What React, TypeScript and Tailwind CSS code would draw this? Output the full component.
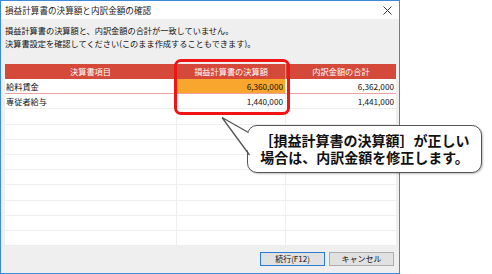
import React from "react";

const font = { fontFamily: '"Noto Sans CJK JP", "Noto Sans", sans-serif' };

const rows: { name: string; a: string; b: string; sel?: boolean }[] = [
  { name: "給料賃金", a: "6,360,000", b: "6,362,000", sel: true },
  { name: "専従者給与", a: "1,440,000", b: "1,441,000" },
  { name: "", a: "", b: "" },
  { name: "", a: "", b: "" },
  { name: "", a: "", b: "" },
  { name: "", a: "", b: "" },
  { name: "", a: "", b: "" },
  { name: "", a: "", b: "" },
  { name: "", a: "", b: "" },
  { name: "", a: "", b: "" },
  { name: "", a: "", b: "" },
];

export default function App() {
  return (
    <div className="relative w-[492px] h-[274px] bg-white overflow-hidden" style={font}>
      <div className="flex flex-col w-[400px] h-[274px] border border-[#3f8ad8] bg-[#efefef]">
        <div className="flex items-center justify-between h-[18px] bg-white pl-[4px] pr-[7px]">
          <span className="text-[8.6px] leading-none text-[#222]">損益計算書の決算額と内訳金額の確認</span>
          <svg width="9" height="9" viewBox="0 0 9 9">
            <path d="M0.5 0.5 L8.5 8.5 M8.5 0.5 L0.5 8.5" stroke="#333" strokeWidth="1" />
          </svg>
        </div>
        <div className="flex flex-col flex-1 px-[4px] pt-[5px]">
          <div className="text-[8.2px] leading-[13px] text-[#111]">
            <div>損益計算書の決算額と、内訳金額の合計が一致していません。</div>
            <div>決算書設定を確認してください(このまま作成することもできます)。</div>
          </div>
          <div className="mt-[14px] w-[391px]">
            <div className="flex h-[15px] bg-[#d5493b] text-white text-[8.2px]">
              <div className="w-[172px] flex items-center justify-center border-r border-[#e8887e]">決算書項目</div>
              <div className="w-[109px] flex items-center justify-center border-r border-[#e8887e]">損益計算書の決算額</div>
              <div className="flex-1 flex items-center justify-center">内訳金額の合計</div>
            </div>
            {rows.map((r, i) => (
              <div
                key={i}
                className={
                  "flex h-[15.2px] text-[8.2px] text-[#111] bg-white border-b " +
                  (r.sel ? "border-[#f0a0a0]" : "border-[#eeeeee]")
                }
              >
                <div className="w-[172px] flex items-center pl-[1px] border-r border-[#eeeeee]">{r.name}</div>
                <div
                  className={
                    "w-[109px] flex items-center justify-end pr-[2px] border-r border-[#eeeeee] " +
                    (r.sel ? "bg-[#f8a62e]" : "")
                  }
                >
                  {r.a}
                </div>
                <div className="flex-1 flex items-center justify-end pr-[2px]">{r.b}</div>
              </div>
            ))}
          </div>
          <div className="flex justify-end gap-[4px] mt-[6px] pr-[1px]">
            <div className="w-[65px] h-[14px] flex items-center justify-center bg-[#e1e1e1] border border-[#2a7ad6] text-[8px] text-[#111]">
              続行(F12)
            </div>
            <div className="w-[65px] h-[14px] flex items-center justify-center bg-[#e1e1e1] border border-[#adadad] text-[8px] text-[#111]">
              キャンセル
            </div>
          </div>
        </div>
      </div>

      {/* red highlight */}
      <div className="absolute left-[174px] top-[59px] w-[116px] h-[56px] border-[3px] border-[#f01414] rounded-[7px]" />

      {/* callout */}
      <div className="absolute left-[247px] top-[125px] w-[235px] h-[48px] rounded-[10px] border-[1.5px] border-[#555] bg-white shadow-[1px_1px_2px_rgba(0,0,0,0.25)] flex flex-col items-center justify-center">
        <div className="text-[14px] leading-[17px] font-bold text-[#111] text-center">
          <div>［損益計算書の決算額］が正しい</div>
          <div>場合は、内訳金額を修正します。</div>
        </div>
      </div>
      <svg className="absolute left-0 top-0" width="492" height="274" viewBox="0 0 492 274">
        <polygon points="249.5,133 222,117.5 251,155" fill="white" />
        <path d="M248.5 132.5 L222 117.5 L249.5 155" fill="none" stroke="#555" strokeWidth="1.3" />
      </svg>
    </div>
  );
}
